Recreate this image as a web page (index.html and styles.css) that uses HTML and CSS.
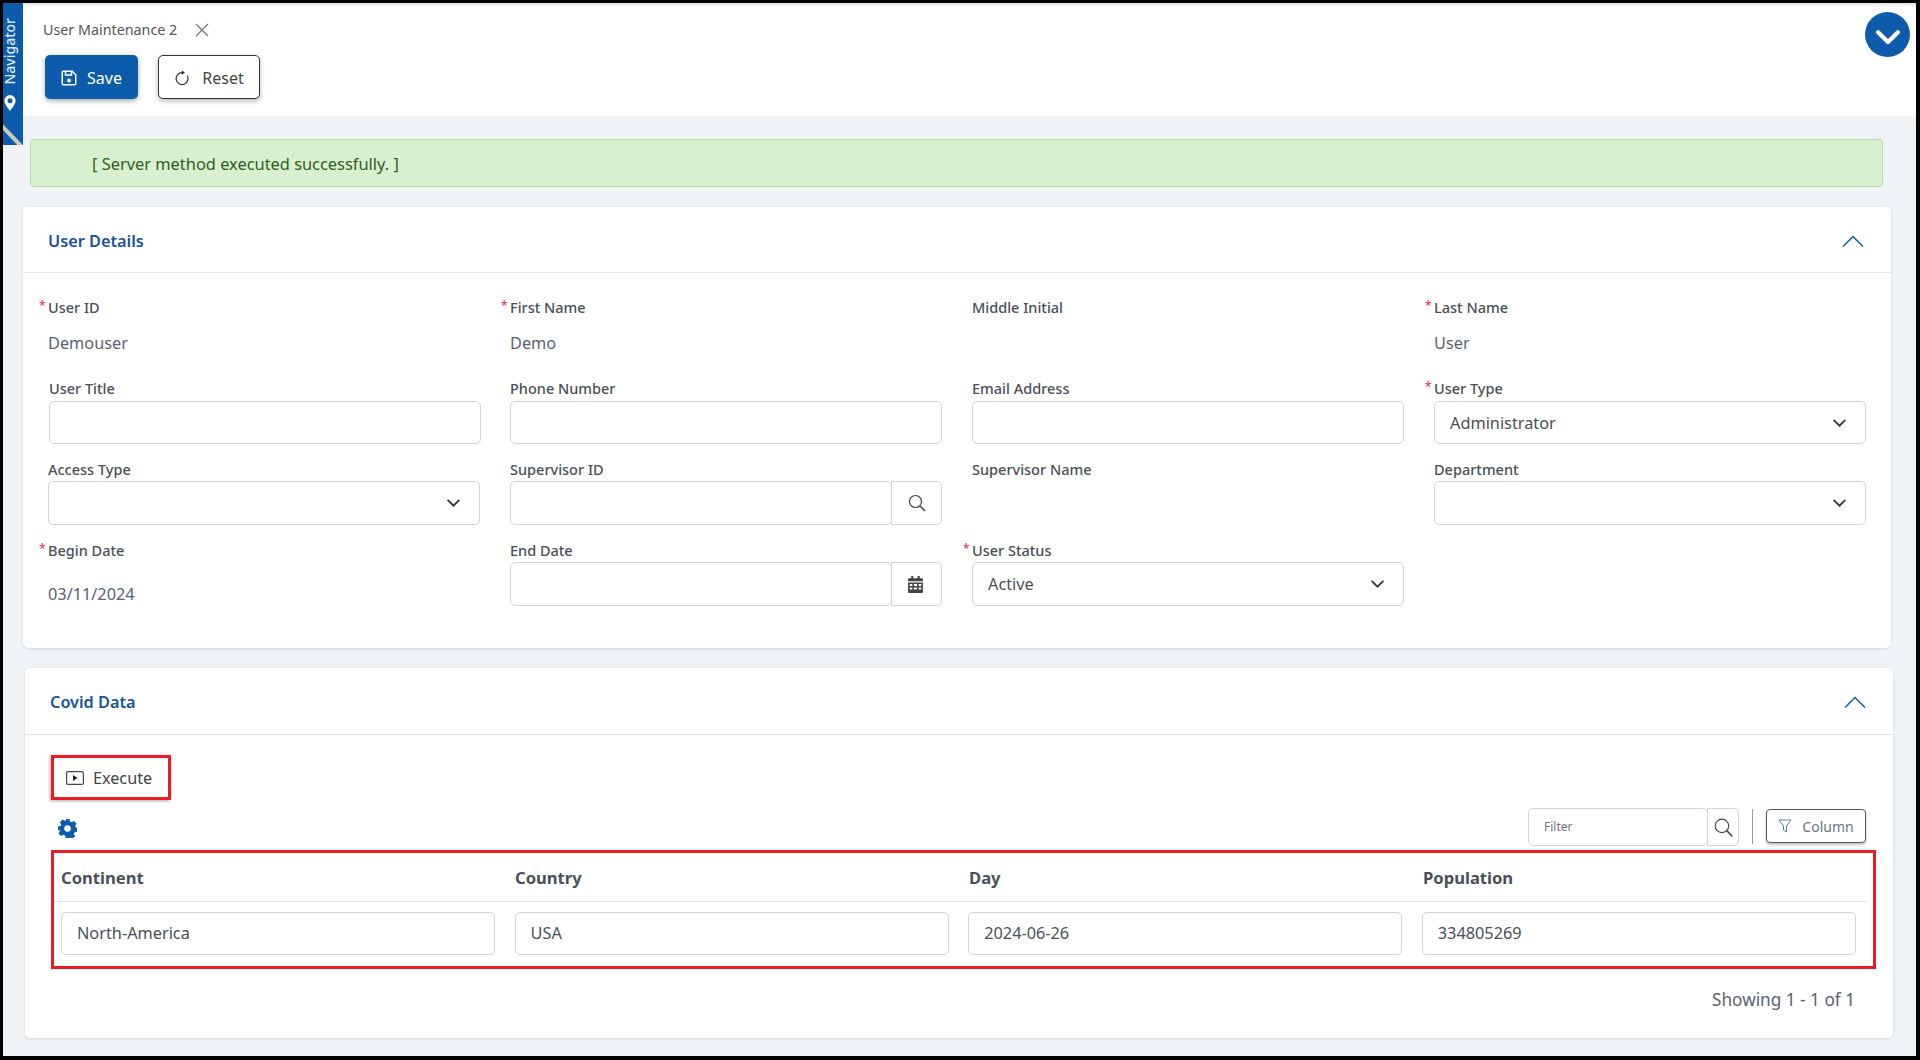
FILE: index.html
```html
<!DOCTYPE html>
<html lang="en">
<head>
<meta charset="utf-8">
<title>User Maintenance 2</title>
<link rel="stylesheet" href="styles.css">
</head>
<body>
<div class="frame">
  <aside class="nav-tab">
    <span class="nav-label">Navigator</span>
    <svg class="nav-pin" viewBox="0 0 12 16"><path fill="#fff" fill-rule="evenodd" d="M6 0a5.6 5.6 0 0 0-5.6 5.6C.4 9.4 6 16 6 16s5.600-6.600 5.600-10.400A5.600 5.600 0 0 0 6 0zm0 3.200a2.500 2.500 0 1 1 0 5 2.500 2.500 0 0 1 0-5z"/></svg>
    <svg class="nav-grip" viewBox="0 0 20 20"><path d="M-2 0 18 21" stroke="#cbc7ba" stroke-width="4" fill="none"/></svg>
  </aside>
  <header class="top">
    <div class="tab-row">
      <span class="tab-name">User Maintenance 2</span>
      <svg class="tab-x" viewBox="0 0 14 14"><path d="M1 1 13 13M13 1 1 13" stroke="#777" stroke-width="1.300" fill="none"/></svg>
    </div>
    <div class="actions">
      <button class="btn btn-primary">
        <svg class="btn-ico" viewBox="0 0 16 16"><path fill="none" stroke="#fff" stroke-width="1.500" d="M2.500 1.250h8.700l3.550 3.550v8.700a1.250 1.250 0 0 1-1.250 1.250h-11a1.250 1.250 0 0 1-1.250-1.250v-11A1.250 1.250 0 0 1 2.500 1.250z"/><path fill="none" stroke="#fff" stroke-width="1.500" d="M4.500 1.500v3.500h6V1.500"/><circle cx="8" cy="10.500" r="2" fill="#fff"/></svg>
        Save
      </button>
      <button class="btn btn-outline">
        <svg class="btn-ico" viewBox="0 0 16 16"><path d="M8 2.600A6 6 0 1 0 13.200 5.500" fill="none" stroke="#333" stroke-width="1.200"/><path d="M7.800.4v4.400L11 2.600z" fill="#333"/></svg>
        Reset
      </button>
    </div>
    <button class="collapse-all">
      <svg viewBox="0 0 24 24"><path d="M5 10 12 17 19 10" fill="none" stroke="#fff" stroke-width="3" stroke-linecap="round" stroke-linejoin="round"/></svg>
    </button>
  </header>

  <main class="content">
    <div class="alert">[ Server method executed successfully. ]</div>

    <section class="card card-user">
      <div class="card-head">
        <h2 class="card-title">User Details</h2>
        <svg class="chev-up" viewBox="0 0 22 12"><path d="M1 11.500 11 1.500 21 11.500" fill="none" stroke="#0d5cab" stroke-width="1.500"/></svg>
      </div>
      <div class="form-grid">
        <div class="field"><label class="lbl req">User ID</label><div class="val">Demouser</div></div>
        <div class="field"><label class="lbl req">First Name</label><div class="val">Demo</div></div>
        <div class="field"><label class="lbl">Middle Initial</label></div>
        <div class="field"><label class="lbl req">Last Name</label><div class="val">User</div></div>

        <div class="field nudge"><label class="lbl">User Title</label><div class="ctl short"></div></div>
        <div class="field"><label class="lbl">Phone Number</label><div class="ctl short"></div></div>
        <div class="field"><label class="lbl">Email Address</label><div class="ctl short"></div></div>
        <div class="field"><label class="lbl req">User Type</label>
          <div class="ctl short ctl-select"><span>Administrator</span><svg class="chev" viewBox="0 0 14 9"><path d="M1.500 1.500 7 7 12.500 1.500" fill="none" stroke="#333" stroke-width="1.600"/></svg></div></div>

        <div class="field"><label class="lbl">Access Type</label>
          <div class="ctl ctl-select"><span></span><svg class="chev" viewBox="0 0 14 9"><path d="M1.500 1.500 7 7 12.500 1.500" fill="none" stroke="#333" stroke-width="1.600"/></svg></div></div>
        <div class="field"><label class="lbl">Supervisor ID</label>
          <div class="group"><div class="ctl grow"></div><div class="addon">
            <svg class="ico-search" viewBox="0 0 18 18"><circle cx="7.500" cy="7.500" r="6" fill="none" stroke="#444" stroke-width="1.200"/><path d="M12 12 17 17" stroke="#444" stroke-width="1.500"/></svg></div></div></div>
        <div class="field"><label class="lbl">Supervisor Name</label></div>
        <div class="field"><label class="lbl">Department</label>
          <div class="ctl ctl-select"><span></span><svg class="chev" viewBox="0 0 14 9"><path d="M1.500 1.500 7 7 12.500 1.500" fill="none" stroke="#333" stroke-width="1.600"/></svg></div></div>

        <div class="field"><label class="lbl req">Begin Date</label><div class="val val-date">03/11/2024</div></div>
        <div class="field"><label class="lbl">End Date</label>
          <div class="group"><div class="ctl grow"></div><div class="addon addon-cal">
            <svg class="ico-cal" viewBox="0 0 14 16"><path fill="#444" fill-rule="evenodd" d="M3 0h2v2h4V0h2v2h2a1 1 0 0 1 1 1v2H0V3a1 1 0 0 1 1-1h2zM0 6h14v9a1 1 0 0 1-1 1H1a1 1 0 0 1-1-1zm1.500 1.500v2h2.500v-2zm4 0v2h3v-2zm4.500 0v2h2.500v-2zm-8.500 3.300v2h2.500v-2zm4 0v2h3v-2zm4.500 0v2h2.500v-2z"/></svg></div></div></div>
        <div class="field"><label class="lbl req">User Status</label>
          <div class="ctl ctl-select"><span>Active</span><svg class="chev" viewBox="0 0 14 9"><path d="M1.500 1.500 7 7 12.500 1.500" fill="none" stroke="#333" stroke-width="1.600"/></svg></div></div>
      </div>
    </section>

    <section class="card card-covid">
      <div class="card-head">
        <h2 class="card-title">Covid Data</h2>
        <svg class="chev-up" viewBox="0 0 22 12"><path d="M1 11.500 11 1.500 21 11.500" fill="none" stroke="#0d5cab" stroke-width="1.500"/></svg>
      </div>
      <div class="covid-body">
        <button class="execute">
          <svg class="ico-play" viewBox="0 0 18 14"><rect x=".6" y=".6" width="16.800" height="12.800" rx="1.500" fill="none" stroke="#444" stroke-width="1.200"/><path d="M7 4v6l4.500-3z" fill="#222"/></svg>
          Execute
        </button>
        <div class="grid-tools">
          <svg class="ico-gear" viewBox="0 0 20 20"><path fill="#0d5cab" fill-rule="evenodd" d="M8 0h4l.6 2.700 1.700.7 2.400-1.400 2.800 2.800-1.400 2.400.7 1.700 1.200.6v4l-2.700.6-.7 1.700 1.400 2.400-2.800 2.800-2.400-1.400-1.700.7L12 20H8l-.6-2.700-1.700-.7-2.400 1.400-2.800-2.800 1.400-2.400-.7-1.700L0 12V8l2.700-.6.700-1.700L2 3.300 4.800.5l2.400 1.400 1.700-.7zM10 6.600a3.400 3.400 0 1 0 0 6.800 3.400 3.400 0 0 0 0-6.800z"/></svg>
          <div class="tools-right">
            <div class="filter">
              <div class="filter-input">Filter</div>
              <div class="filter-btn"><svg class="ico-search-lg" viewBox="0 0 18 18"><circle cx="7.500" cy="7.500" r="6.400" fill="none" stroke="#444" stroke-width="1.100"/><path d="M12 12 17.500 17.500" stroke="#444" stroke-width="1.500"/></svg></div>
            </div>
            <span class="tool-sep"></span>
            <button class="btn-column">
              <svg class="ico-funnel" viewBox="0 0 14 14"><path d="M1 1h12L8.500 7v6L5.500 11V7z" fill="none" stroke="#5a7ea6" stroke-width="1"/></svg>
              Column
            </button>
          </div>
        </div>
        <div class="marked">
          <div class="tbl-head">
            <span>Continent</span><span>Country</span><span>Day</span><span>Population</span>
          </div>
          <div class="tbl-row">
            <div class="ctl cell">North-America</div>
            <div class="ctl cell">USA</div>
            <div class="ctl cell">2024-06-26</div>
            <div class="ctl cell">334805269</div>
          </div>
        </div>
        <div class="paging">Showing 1 - 1 of 1</div>
      </div>
    </section>
  </main>
</div>
</body>
</html>
```

FILE: styles.css
```css
* { box-sizing: border-box; }
html, body { margin: 0; height: 100%; }
body {
  background: #000;
  font-family: "Noto Sans", sans-serif;
  color: #495057;
  overflow: hidden;
}
.frame {
  position: relative;
  margin: 3px 4px 0 3px;
  height: 1053px;
  background: #eff3f6;
  display: flex;
  flex-direction: column;
}
.nav-tab {
  position: absolute;
  left: 0;
  top: 0;
  width: 20px;
  height: 142px;
  background: #0d5cab;
  z-index: 2;
}
.nav-label {
  position: absolute;
  top: 15px;
  left: 0;
  width: 20px;
  writing-mode: vertical-rl;
  transform: rotate(180deg);
  font-size: 14px;
  font-weight: 500;
  line-height: 13px;
  color: #dfe9f3;
  white-space: nowrap;
}
.nav-pin { position: absolute; left: 1px; top: 92px; width: 12px; height: 16px; }
.nav-grip { position: absolute; left: 0; top: 122px; width: 20px; height: 20px; }

.top {
  position: relative;
  margin-left: 20px;
  height: 113px;
  background: #fff;
  flex: none;
  box-shadow: inset 0 6px 5px -5px rgba(0,0,0,.18);
}
.tab-row {
  display: flex;
  align-items: center;
  gap: 12px;
  padding: 17px 0 0 20px;
  height: 36px;
}
.tab-name { font-size: 14.3px; line-height: 19px; color: #555; }
.tab-x { width: 14px; height: 14px; margin-left: 6px; }
.actions { display: flex; gap: 20px; padding: 16px 0 0 22px; }
.btn {
  height: 44px;
  border-radius: 5px;
  font: 400 16px "Noto Sans", sans-serif;
  display: flex;
  align-items: center;
  gap: 10px;
  padding: 1px 0 0;
  justify-content: center;
}
.btn-primary { width: 93px; background: #0d5cab; color: #fff; border: 0; box-shadow: 0 2px 5px rgba(0,0,0,.35); }
.btn-outline { width: 102px; background: #fff; color: #444; border: 1px solid #333; box-shadow: 0 2px 5px rgba(0,0,0,.3); gap: 12px; }
.btn-ico { width: 16px; height: 16px; }
.collapse-all {
  position: absolute;
  top: 9px;
  right: 6px;
  width: 45px;
  height: 45px;
  border: 0;
  padding: 0;
  border-radius: 50%;
  background: #0d5cab;
  display: flex;
  align-items: center;
  justify-content: center;
}
.collapse-all svg { width: 34px; height: 34px; }

.content { flex: 1; padding: 23px 0 0 20px; }
.alert {
  margin: 0 33px 0 7px;
  height: 48px;
  background: #d9f0cf;
  border: 1px solid #b3dfa5;
  border-radius: 4px;
  font-size: 16.4px;
  line-height: 47px;
  padding-left: 61px;
  color: #2f5d1e;
}
.card { background: #fff; border-radius: 5px; box-shadow: 0 1px 3px rgba(0,0,0,.12); }
.card-user { margin: 20px 25px 0 0; height: 441px; }
.card-covid { margin: 20px 23px 0 2px; height: 370px; }
.card-head {
  height: 66px;
  display: flex;
  align-items: center;
  justify-content: space-between;
  padding: 2px 27px 0 25px;
  border-bottom: 1px solid #e1e4e8;
}
.card-covid .card-head { height: 67px; }
.card-title { margin: 0; font-size: 16.3px; font-weight: 600; color: #17539a; }
.chev-up { width: 22px; height: 12px; }

.form-grid {
  display: grid;
  grid-template-columns: repeat(4, 432px);
  grid-auto-rows: 81px;
  column-gap: 30px;
  padding: 24px 0 0 25px;
}
.field { display: flex; flex-direction: column; }
.nudge { margin: 0 -1px 0 1px; }
.lbl { font-size: 14.5px; font-weight: 500; line-height: 20px; height: 20px; margin-bottom: 2px; position: relative; color: #495057; }
.req::before { content: "*"; position: absolute; left: -9px; top: -1px; color: #f0325a; font-size: 12px; }
.val { font-size: 16.3px; line-height: 22px; padding-top: 13px; height: 39px; color: #5a6270; }
.val-date { padding-top: 21px; height: 47px; }
.ctl {
  height: 44px;
  border: 1px solid #ced4da;
  border-radius: 5px;
  background: #fff;
  font-size: 16.3px;
  line-height: 42px;
  padding: 0 15px;
  color: #495057;
}
.short { height: 43px; margin-top: 1px; }
.cell { height: 43px; line-height: 41px; }
.ctl-select { display: flex; align-items: center; justify-content: space-between; padding-right: 18px; }
.chev { width: 15px; height: 10px; }
.group { display: flex; }
.grow { flex: 1; }
.addon {
  width: 51px;
  height: 44px;
  margin-left: -1px;
  border: 1px solid #ced4da;
  border-radius: 0 5px 5px 0;
  display: flex;
  align-items: center;
  justify-content: center;
}
.addon-cal { padding-right: 3px; }
.ico-search { width: 18px; height: 18px; }
.ico-cal { width: 15px; height: 17px; }

.covid-body { padding: 20px 0 0 26px; }
.execute {
  width: 120px;
  height: 45px;
  background: #fff;
  border: 3px solid #ed1c24;
  display: flex;
  align-items: center;
  gap: 9px;
  padding: 0 0 0 12px;
  font: 400 16.2px "Noto Sans", sans-serif;
  color: #444;
  box-shadow: -1px 1px 3px rgba(0,0,0,.35);
}
.ico-play { width: 18px; height: 14px; }
.grid-tools {
  display: flex;
  align-items: center;
  justify-content: space-between;
  height: 38px;
  margin-top: 8px;
  padding: 0 27px 0 7px;
}
.ico-gear { width: 19px; height: 19px; margin-top: 2px; }
.tools-right { display: flex; align-items: flex-start; gap: 13px; height: 38px; }
.filter { display: flex; height: 38px; width: 211px; }
.filter-input {
  flex: 1;
  border: 1px solid #ced4da;
  border-radius: 5px;
  font-size: 12px;
  line-height: 36px;
  padding-left: 15px;
  color: #6c757d;
}
.filter-btn {
  width: 32px;
  margin-left: -1px;
  border: 1px solid #ced4da;
  border-radius: 0 5px 5px 0;
  display: flex;
  align-items: center;
  justify-content: center;
}
.ico-search-lg { width: 19px; height: 19px; }
.tool-sep { width: 1px; height: 35px; margin-top: 1px; background: #999; }
.btn-column {
  width: 100px;
  height: 34px;
  margin-top: 1px;
  background: #fff;
  border: 1px solid #555;
  border-radius: 4px;
  display: flex;
  align-items: center;
  justify-content: center;
  gap: 10px;
  padding: 0;
  font: 400 14px "Noto Sans", sans-serif;
  color: #6c757d;
  box-shadow: 0 2px 3px rgba(0,0,0,.25);
}
.ico-funnel { width: 14px; height: 14px; }
.marked {
  margin-top: 4px;
  width: 1825px;
  height: 119px;
  border: 3px solid #ed1c24;
}
.tbl-head {
  display: grid;
  grid-template-columns: repeat(4, 434px);
  column-gap: 20px;
  height: 49px;
  margin-right: 7px;
  padding-left: 7px;
  border-bottom: 1px solid #dee2e6;
  font-size: 16.6px;
  font-weight: 700;
  line-height: 50px;
  color: #495057;
}
.tbl-row {
  display: grid;
  grid-template-columns: repeat(4, 434px);
  column-gap: 19.6px;
  padding: 10px 0 0 7px;
}
.paging { text-align: right; font-size: 17.2px; line-height: 22px; margin-top: 20px; padding-right: 38px; color: #5a6270; }
```
